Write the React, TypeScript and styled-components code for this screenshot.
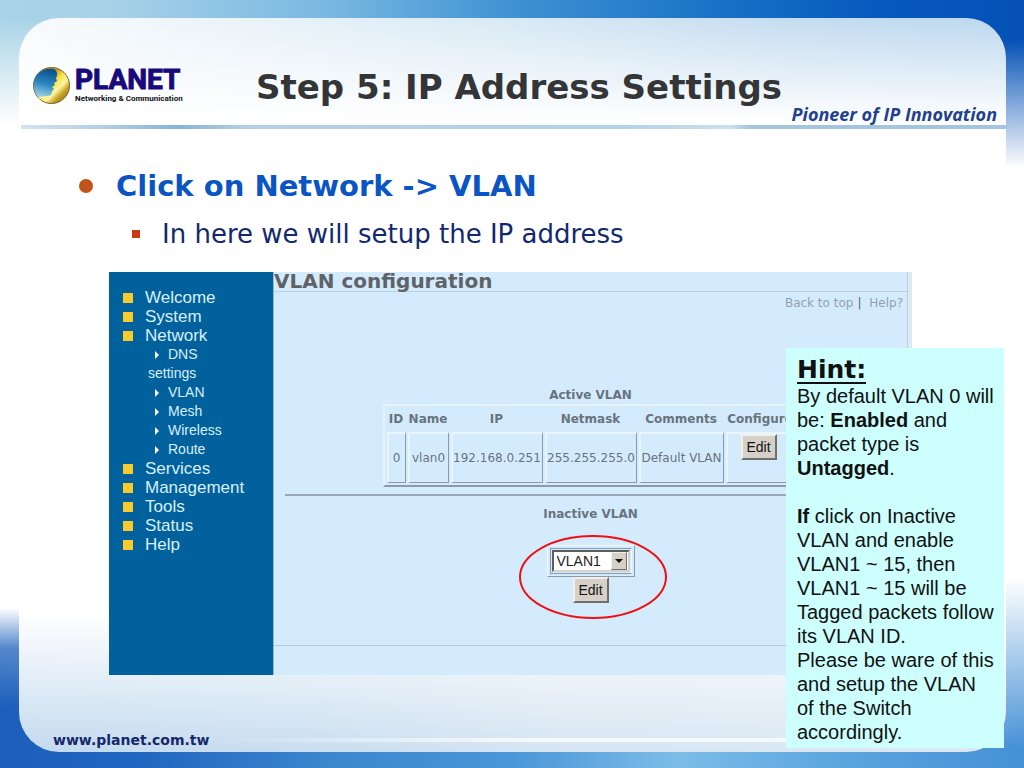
import React from "react";
import styled, { createGlobalStyle } from "styled-components";

const verdana = `"DejaVu Sans", sans-serif`;
const arial = `"Liberation Sans", sans-serif`;

const GlobalStyle = createGlobalStyle`
  *, *::before, *::after { box-sizing: border-box; }
  body { margin: 0; font-family: ${verdana}; }
  h1, h2, h3, h4, p, ul { margin: 0; padding: 0; }
  ul { list-style: none; }
  a { color: inherit; text-decoration: none; }
`;

const Slide = styled.div`
  display: flex;
  min-height: 100vh;
  padding: 18px 18px 16px 19px;
  background:
    linear-gradient(to bottom, rgba(255, 255, 255, 0) 40px, #fff 100%) top right / 30% 168px no-repeat,
    linear-gradient(to bottom, rgba(255, 255, 255, 0) 18px, #fff 125px) top left / 70% 168px no-repeat,
    linear-gradient(to right, #a9d4e7 0%, #a5d0e7 12%, #79b8e2 32%, #3f92d3 50%, #1a72c6 70%, #0759be 86%, #0551b6 100%) top / 100% 168px no-repeat,
    linear-gradient(to top, rgba(255, 255, 255, 0) 60px, rgba(255, 255, 255, 0.25) 120px, #fff 160px) bottom left / 50% 200px no-repeat,
    linear-gradient(to top, rgba(255, 255, 255, 0) 20px, #fff 190px) bottom right / 50% 200px no-repeat,
    linear-gradient(to right, #1b5fbb 0%, #2166c0 14%, #3c86ce 32%, #4a96d8 50%, #7dbce8 66%, #5ba6df 82%, #4690d6 100%) bottom / 100% 200px no-repeat,
    #fff;
`;

const Card = styled.div`
  position: relative;
  flex: 1;
  display: flex;
  flex-direction: column;
  min-width: 0;
  border-radius: 40px;
  background:
    linear-gradient(to bottom, rgba(255, 255, 255, 0), #fff 100%) top / 100% 104px no-repeat,
    linear-gradient(to right, #f8fbfd 0%, #ebf4f9 20%, #d8e9f4 50%, #c5dcf0 78%, #bcd8ef 100%) top / 100% 104px no-repeat,
    linear-gradient(to top, rgba(255, 255, 255, 0) 0, #fff 100%) bottom / 100% 140px no-repeat,
    linear-gradient(to right, #c3daef 0%, #c9def0 30%, #d6e5f2 55%, #dde9f4 100%) bottom / 100% 140px no-repeat,
    #fff;
`;

const Header = styled.header`
  display: flex;
  align-items: flex-start;
  height: 111px;
  margin-left: 2px;
  padding: 48px 9px 0 12px;
  border-bottom: 4px solid;
  border-image: linear-gradient(to right, #d3e3ef 0%, #b4d1e5 8%, #85b4d8 16%, #b5d0e4 23%, #b3d1e8 60%, #c9e0ee 72%, #a3c5de 74%, #a3c5de 100%) 1;
`;

const Brand = styled.a`
  display: flex;
  gap: 5px;
  width: 150px;

  svg {
    flex: none;
    margin-top: 1px;
  }
`;

const BrandText = styled.span`
  display: flex;
  flex-direction: column;
  font-family: Roboto, ${arial};
  font-weight: 700;
  white-space: nowrap;
`;

const BrandName = styled.span`
  font-size: 28px;
  line-height: 28px;
  color: #180a7c;
  -webkit-text-stroke: 1px #180a7c;
`;

const BrandLine = styled.span`
  font-size: 8px;
  line-height: 10px;
  color: #111;
`;

const Title = styled.h1`
  margin-left: 73px;
  font-size: 34px;
  line-height: 42px;
  color: #333537;
  white-space: nowrap;
`;

const Slogan = styled.p`
  flex: 1;
  align-self: flex-end;
  font-family: "Open Sans", sans-serif;
  font-size: 18px;
  line-height: 22px;
  font-style: italic;
  font-weight: 700;
  color: #1f3f8f;
  text-align: right;
  white-space: nowrap;
`;

const Outline = styled.section`
  padding: 35px 60px 0 60px;
`;

const Point = styled.h2`
  display: flex;
  align-items: center;
  gap: 23px;
  font-size: 29px;
  line-height: 44px;
  color: #0a55c4;
  &::before {
    content: "";
    width: 14px;
    height: 14px;
    border-radius: 50%;
    background: #c0531c;
  }
`;

const SubPoint = styled.p`
  display: flex;
  align-items: center;
  gap: 22px;
  padding-left: 53px;
  font-size: 26px;
  line-height: 52px;
  color: #12296f;
  &::before {
    content: "";
    width: 8px;
    height: 8px;
    background: #cc3a12;
  }
`;

const Console = styled.section`
  display: flex;
  min-height: 403px;
  margin: 12px 94px 0 90px;
  border-right: 4px solid #dcebf2;
  background: #d4ebfe;
`;

const Sidebar = styled.nav`
  flex: none;
  width: 164px;
  padding: 16px 0 0 14px;
  background: #00619d;
  color: #d9effb;
  font-family: ${arial};
`;

const MenuLink = styled.a`
  display: flex;
  align-items: center;
  gap: 12px;
  font-size: 17px;
  line-height: 19px;
  &::before {
    content: "";
    width: 10px;
    height: 10px;
    background: #f8ca2c;
  }
`;

const SubMenu = styled.ul`
  padding: 0 40px 0 25px;
  font-size: 14px;
  line-height: 19px;
`;

const SubLink = styled.a`
  display: block;
  &::before {
    content: "";
    display: inline-block;
    margin: 0 9px 0 7px;
    border-left: 4px solid #fff;
    border-top: 4px solid transparent;
    border-bottom: 4px solid transparent;
  }
`;

const Pane = styled.div`
  flex: 1;
  display: flex;
  flex-direction: column;
  min-width: 0;
  border-left: 1px solid #9db8c8;
  border-right: 1px solid #bccfdb;
  color: #67747c;
  font-size: 12px;
`;

const PaneTitle = styled.h3`
  border-bottom: 1px solid #bdcfdc;
  font-size: 20px;
  line-height: 19px;
  color: #5f6367;
`;

const PaneLinks = styled.div`
  display: flex;
  justify-content: flex-end;
  gap: 4px;
  padding: 4px 4px 0 0;
  line-height: 15px;
  color: #93a1ab;
`;

const Divider = styled.span`
  color: #55616a;
`;

const VlanTable = styled.table`
  margin: 77px auto 0;
  border: 2px solid;
  border-color: #e6f3fc #8b9aab #8b9aab #e6f3fc;
  border-spacing: 2px;
  table-layout: fixed;
  width: 416px;

  caption {
    padding-bottom: 2px;
    font-weight: 700;
    line-height: 14px;
  }
  th {
    height: 22px;
    padding: 0;
    white-space: nowrap;
  }
  td {
    height: 51px;
    padding: 0;
    border: 2px solid;
    border-color: #e8f5fd #8b9aab #8b9aab #e8f5fd;
    border-right-width: 1px;
    border-bottom-width: 1px;
    text-align: center;
    white-space: nowrap;
  }
  td:last-child {
    padding: 0 4px 0 0;
    vertical-align: top;
  }
`;

const Col = styled.col<{ $w: number }>`
  width: ${(p) => p.$w}px;
`;

const GreyButton = styled.button`
  width: 36px;
  height: 26px;
  padding: 0;
  border: 2px solid;
  border-color: #f1efe9 #6e6e6c #6e6e6c #f1efe9;
  background: #d5d1c8;
  color: #111;
  font-family: ${arial};
  font-size: 14px;
`;

const Rule = styled.hr`
  width: calc(100% - 22px);
  height: 2px;
  margin: 7px auto 11px;
  border: 0;
  background: #9ba6b8;
`;

const Inactive = styled.form`
  display: flex;
  flex-direction: column;
  align-items: center;
  height: 139px;
  border-bottom: 1px solid #b6cbda;
`;

const InactiveLabel = styled.label`
  padding-bottom: 23px;
  font-weight: 700;
  line-height: 15px;
`;

const Picker = styled.div`
  position: relative;
  display: flex;
  flex-direction: column;
  align-items: center;
`;

const SelectFrame = styled.div`
  position: relative;
  width: 88px;
  height: 32px;
  padding: 2px;
  border: 1px solid;
  border-color: #eff8fe #8b9aab #8b9aab #eff8fe;
  &::before {
    content: "";
    position: absolute;
    inset: 2px;
    border: 1px solid;
    border-color: #8b9aab #eff8fe #8b9aab #8b9aab;
  }
`;

const Select = styled.select`
  position: relative;
  display: block;
  width: 78px;
  height: 22px;
  margin: 2px;
  padding: 0 0 0 3px;
  appearance: none;
  border: 2px solid;
  border-color: #5d5d5d #d5d1c8 #d5d1c8 #5d5d5d;
  border-radius: 0;
  background: #fff;
  color: #222;
  font-family: ${arial};
  font-size: 14px;
`;

const Arrow = styled.span`
  position: absolute;
  top: 6px;
  right: 7px;
  display: grid;
  place-items: center;
  width: 16px;
  height: 18px;
  border: 1px solid;
  border-color: #f1efe9 #6e6e6c #6e6e6c #f1efe9;
  background: #d5d1c8;
  pointer-events: none;
  &::before {
    content: "";
    border-top: 4px solid #111;
    border-left: 4px solid transparent;
    border-right: 4px solid transparent;
  }
`;

const Highlight = styled.svg`
  position: absolute;
  top: -10px;
  left: 50%;
  width: 148px;
  height: 84px;
  margin-left: -72px;
  pointer-events: none;
`;

const Hint = styled.aside`
  position: absolute;
  top: 330px;
  right: 2px;
  width: 218px;
  padding: 10px 6px 4px 11px;
  background: #ccfffe;
  color: #111;
  font-family: ${arial};
  font-size: 20px;
  line-height: 24px;
`;

const HintTitle = styled.h4`
  width: max-content;
  border-bottom: 2px solid #111;
  font-family: ${verdana};
  font-size: 25px;
  line-height: 24px;
`;

const HintText = styled.p`
  & + & {
    margin-top: 24px;
  }
`;

const Footer = styled.footer`
  display: flex;
  align-items: center;
  gap: 10px;
  margin-top: auto;
  padding: 0 20px 3px 34px;
  font-size: 14px;
  line-height: 18px;
  font-weight: 700;
  color: #14286b;
  &::after {
    content: "";
    flex: 1;
    height: 4px;
    background: linear-gradient(to right, rgba(255, 255, 255, 0), #f4f9fc 40%);
  }
`;

const Globe = () => (
  <svg width="37" height="37" viewBox="0 0 37 37" aria-hidden="true">
    <defs>
      <linearGradient id="gold" x1="0" y1="0" x2="1" y2="1">
        <stop offset="0.35" stopColor="#c79a18" />
        <stop offset="0.5" stopColor="#f7e24a" />
        <stop offset="0.64" stopColor="#fff6a0" />
        <stop offset="0.76" stopColor="#c9a024" />
        <stop offset="1" stopColor="#7a6114" />
      </linearGradient>
      <linearGradient id="sea" x1="0.5" y1="0" x2="0.3" y2="1">
        <stop offset="0" stopColor="#0b4f92" />
        <stop offset="0.5" stopColor="#2a86bd" />
        <stop offset="1" stopColor="#a5dceb" />
      </linearGradient>
    </defs>
    <circle cx="18.5" cy="18.5" r="18" fill="url(#gold)" stroke="#6f6434" />
    <path
      d="M21 2C24 4 25 7 23 11L24 14L21 16L22 18L19 20L21 22L19 24C21 28 17 30 12 30C9 30 8 31 6 31C-2 23 0 10 7 5C11 2 16 1 21 2Z"
      fill="url(#sea)"
    />
    <path d="M6 31C8 30 9 30 12 30C17 30 21 28 19 25" fill="none" stroke="#fff3a0" strokeWidth="1.5" />
  </svg>
);

const subItems = ["DNS settings", "VLAN", "Mesh", "Wireless", "Route"];
const menu: { name: string; children?: string[] }[] = [
  { name: "Welcome" },
  { name: "System" },
  { name: "Network", children: subItems },
  { name: "Services" },
  { name: "Management" },
  { name: "Tools" },
  { name: "Status" },
  { name: "Help" },
];

const columns = [
  { name: "ID", width: 19 },
  { name: "Name", width: 41 },
  { name: "IP", width: 92 },
  { name: "Netmask", width: 92 },
  { name: "Comments", width: 85 },
  { name: "Configure", width: 69 },
];

export default function App() {
  return (
    <>
      <GlobalStyle />
      <Slide>
        <Card>
          <Header>
            <Brand href="#home">
              <Globe />
              <BrandText>
                <BrandName>PLANET</BrandName>
                <BrandLine>Networking &amp; Communication</BrandLine>
              </BrandText>
            </Brand>
            <Title>Step 5: IP Address Settings</Title>
            <Slogan>Pioneer of IP Innovation</Slogan>
          </Header>

          <Outline>
            <Point>Click on Network -&gt; VLAN</Point>
            <SubPoint>In here we will setup the IP address</SubPoint>
          </Outline>

          <Console>
            <Sidebar>
              <ul>
                {menu.map((item) => (
                  <li key={item.name}>
                    <MenuLink href="#menu">{item.name}</MenuLink>
                    {item.children && (
                      <SubMenu>
                        {item.children.map((child) => (
                          <li key={child}>
                            <SubLink href="#menu">{child}</SubLink>
                          </li>
                        ))}
                      </SubMenu>
                    )}
                  </li>
                ))}
              </ul>
            </Sidebar>
            <Pane>
              <PaneTitle>VLAN configuration</PaneTitle>
              <PaneLinks>
                <a href="#top">Back to top</a>
                <Divider>|</Divider>
                <a href="#help">&nbsp;Help?</a>
              </PaneLinks>
              <VlanTable>
                <caption>Active VLAN</caption>
                <colgroup>
                  {columns.map((c) => (
                    <Col key={c.name} $w={c.width} />
                  ))}
                </colgroup>
                <thead>
                  <tr>
                    {columns.map((c) => (
                      <th key={c.name} scope="col">{c.name}</th>
                    ))}
                  </tr>
                </thead>
                <tbody>
                  <tr>
                    <td>0</td>
                    <td>vlan0</td>
                    <td>192.168.0.251</td>
                    <td>255.255.255.0</td>
                    <td>Default VLAN</td>
                    <td>
                      <GreyButton type="button">Edit</GreyButton>
                    </td>
                  </tr>
                </tbody>
              </VlanTable>
              <Rule />
              <Inactive>
                <InactiveLabel htmlFor="inactive-vlan">Inactive VLAN</InactiveLabel>
                <Picker>
                  <SelectFrame>
                    <Select id="inactive-vlan" defaultValue="VLAN1">
                      <option>VLAN1</option>
                    </Select>
                    <Arrow />
                  </SelectFrame>
                  <GreyButton type="button">Edit</GreyButton>
                  <Highlight viewBox="0 0 148 84" aria-hidden="true">
                    <ellipse cx="74" cy="42" rx="73" ry="41" fill="none" stroke="#ee1111" strokeWidth="2" />
                  </Highlight>
                </Picker>
              </Inactive>
            </Pane>
          </Console>

          <Hint>
            <HintTitle>Hint:</HintTitle>
            <HintText>
              By default VLAN 0 will be: <b>Enabled</b> and packet type is <b>Untagged</b>.
            </HintText>
            <HintText>
              <b>If</b> click on Inactive VLAN and enable VLAN1 ~ 15, then VLAN1 ~ 15 will be Tagged packets
              follow its VLAN ID.
              <br />
              Please be ware of this and setup the VLAN of the Switch accordingly.
            </HintText>
          </Hint>

          <Footer>
            <a href="#site">www.planet.com.tw</a>
          </Footer>
        </Card>
      </Slide>
    </>
  );
}
